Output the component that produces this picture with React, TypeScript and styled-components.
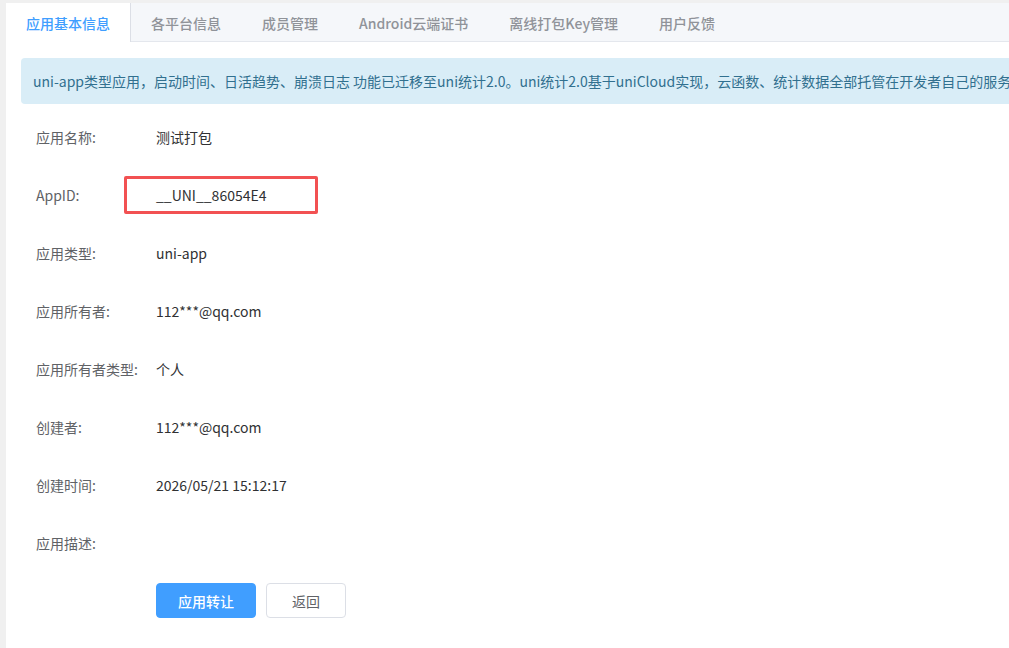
import React from 'react'
import styled, { createGlobalStyle } from 'styled-components'

const GlobalStyle = createGlobalStyle`
  html, body {
    margin: 0;
    padding: 0;
    background: #f0f0f0;
    overflow: hidden;
  }
  body {
    font-family: 'Noto Sans CJK SC', 'Noto Sans', sans-serif;
    font-size: 14px;
  }
`

const Page = styled.div`
  padding: 3px 0 0 6px;
  height: 100vh;
  box-sizing: border-box;
`

const Card = styled.div`
  width: 1300px;
  height: 100%;
  background: #fff;
  display: flex;
  flex-direction: column;
`

const TabBar = styled.div`
  display: flex;
  height: 38px;
  background: #f5f7fa;
  border-bottom: 1px solid #e4e7ed;
`

const Tab = styled.div<{ active?: boolean }>`
  display: flex;
  align-items: center;
  padding: 0 20px;
  margin-left: -1px;
  margin-bottom: -1px;
  font-size: 14px;
  font-weight: 500;
  color: ${({ active }) => (active ? '#409eff' : '#909399')};
  background: ${({ active }) => (active ? '#fff' : 'transparent')};
  border-right: 1px solid ${({ active }) => (active ? '#dcdfe6' : 'transparent')};
  border-left: 1px solid transparent;

  &:first-child {
    margin-left: 0;
    border-left: none;
  }
`

const Body = styled.div`
  padding: 16px 15px 0;
`

const Alert = styled.div`
  height: 46px;
  display: flex;
  align-items: center;
  padding: 0 12px;
  border-radius: 4px;
  background: #d9edf7;
  color: #31708f;
  white-space: nowrap;
`

const InfoList = styled.div`
  margin-top: 4px;
  padding-left: 15px;
`

const Row = styled.div`
  display: flex;
  align-items: center;
  height: 58px;
`

const Label = styled.div`
  width: 120px;
  color: #606266;
`

const Value = styled.div`
  position: relative;
  color: #303133;
`

const Highlight = styled.span`
  position: absolute;
  left: -32px;
  top: 50%;
  width: 194px;
  height: 38px;
  margin-top: -19px;
  border: 3px solid #f25152;
  border-radius: 2px;
  box-sizing: border-box;
`

const Actions = styled.div`
  display: flex;
  gap: 10px;
  margin-top: 11px;
  padding-left: 120px;
`

const Button = styled.button<{ primary?: boolean }>`
  height: 35px;
  width: ${({ primary }) => (primary ? '100px' : '80px')};
  border-radius: 4px;
  font-family: inherit;
  font-size: 14px;
  font-weight: ${({ primary }) => (primary ? 500 : 400)};
  cursor: pointer;
  color: ${({ primary }) => (primary ? '#fff' : '#606266')};
  background: ${({ primary }) => (primary ? '#409eff' : '#fff')};
  border: 1px solid ${({ primary }) => (primary ? '#409eff' : '#dcdfe6')};
`

const tabs = ['应用基本信息', '各平台信息', '成员管理', 'Android云端证书', '离线打包Key管理', '用户反馈']

const rows: { label: string; value: string; mark?: boolean }[] = [
  { label: '应用名称:', value: '测试打包' },
  { label: 'AppID:', value: '__UNI__86054E4', mark: true },
  { label: '应用类型:', value: 'uni-app' },
  { label: '应用所有者:', value: '112***@qq.com' },
  { label: '应用所有者类型:', value: '个人' },
  { label: '创建者:', value: '112***@qq.com' },
  { label: '创建时间:', value: '2026/05/21 15:12:17' },
  { label: '应用描述:', value: '' },
]

export default function App() {
  return (
    <Page>
      <GlobalStyle />
      <Card>
        <TabBar>
          {tabs.map((t, i) => (
            <Tab key={t} active={i === 0}>
              {t}
            </Tab>
          ))}
        </TabBar>
        <Body>
          <Alert>
            uni-app类型应用，启动时间、日活趋势、崩溃日志 功能已迁移至uni统计2.0。uni统计2.0基于uniCloud实现，云函数、统计数据全部托管在开发者自己的服务空间中。
          </Alert>
          <InfoList>
            {rows.map((r) => (
              <Row key={r.label}>
                <Label>{r.label}</Label>
                <Value>
                  {r.mark && <Highlight />}
                  {r.value}
                </Value>
              </Row>
            ))}
            <Actions>
              <Button primary>应用转让</Button>
              <Button>返回</Button>
            </Actions>
          </InfoList>
        </Body>
      </Card>
    </Page>
  )
}
